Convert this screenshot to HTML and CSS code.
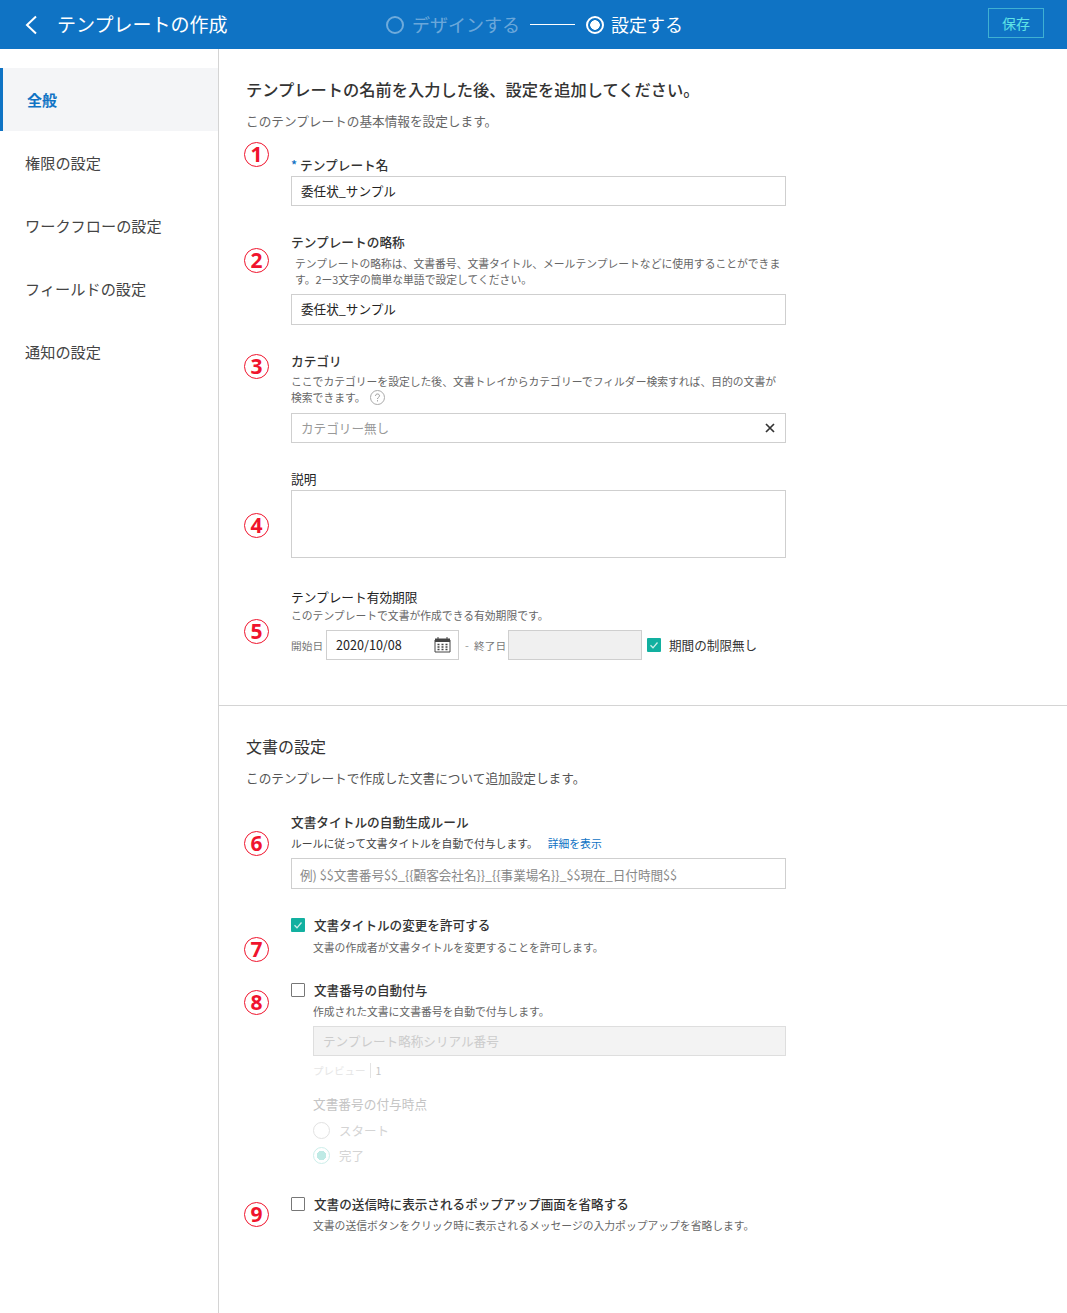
FILE: index.html
```html
<!DOCTYPE html>
<html lang="ja">
<head>
<meta charset="utf-8">
<title>テンプレートの作成</title>
<link rel="stylesheet" href="styles.css">
</head>
<body>
<header class="topbar">
  <div class="topbar-left">
    <svg class="back" width="14" height="20" viewBox="0 0 14 20"><path d="M12 1.5 3 10l9 8.5" fill="none" stroke="#fff" stroke-width="2"/></svg>
    <span class="page-title">テンプレートの作成</span>
  </div>
  <div class="stepper">
    <span class="step step-off"><span class="step-ring"></span><span class="step-text">デザインする</span></span>
    <span class="step-line"></span>
    <span class="step step-on"><span class="step-ring step-ring-on"></span><span class="step-text">設定する</span></span>
  </div>
  <button class="save">保存</button>
</header>
<div class="shell">
  <nav class="side">
    <a class="side-item active">全般</a>
    <a class="side-item">権限の設定</a>
    <a class="side-item">ワークフローの設定</a>
    <a class="side-item">フィールドの設定</a>
    <a class="side-item">通知の設定</a>
  </nav>
  <main class="main">
    <span class="pin p1">1</span><span class="pin p2">2</span><span class="pin p3">3</span>
    <span class="pin p4">4</span><span class="pin p5">5</span><span class="pin p6">6</span>
    <span class="pin p7">7</span><span class="pin p8">8</span><span class="pin p9">9</span>

    <section class="block block-top">
      <h1 class="h-strong">テンプレートの名前を入力した後、設定を追加してください。</h1>
      <p class="lead lead-1">このテンプレートの基本情報を設定します。</p>

      <div class="field f1">
        <div class="label"><span class="req">*</span> テンプレート名</div>
        <div class="input">委任状_サンプル</div>
      </div>
      <div class="field f2">
        <div class="label">テンプレートの略称</div>
        <p class="desc desc-in">テンプレートの略称は、文書番号、文書タイトル、メールテンプレートなどに使用することができます。2ー3文字の簡単な単語で設定してください。</p>
        <div class="input input-31">委任状_サンプル</div>
      </div>
      <div class="field f3">
        <div class="label">カテゴリ</div>
        <p class="desc">ここでカテゴリーを設定した後、文書トレイからカテゴリーでフィルダー検索すれば、目的の文書が検索できます。<svg class="help" width="15" height="15" viewBox="0 0 15 15"><circle cx="7.500" cy="7.500" r="7" fill="none" stroke="#aaa"/><path d="M5.500 6c0-1.300.9-2 2-2s2 .7 2 1.800c0 1.500-2 1.500-2 3.200M7.500 10.200v1.200" fill="none" stroke="#999"/></svg></p>
        <div class="input input-select"><span class="ph">カテゴリー無し</span>
          <svg width="10" height="10" viewBox="0 0 10 10"><path d="M1 1l8 8M9 1l-8 8" stroke="#333" stroke-width="1.700"/></svg>
        </div>
      </div>
      <div class="field f4">
        <div class="label">説明</div>
        <div class="input textarea"></div>
      </div>
      <div class="field f5">
        <div class="label">テンプレート有効期限</div>
        <p class="desc">このテンプレートで文書が作成できる有効期限です。</p>
        <div class="date-row">
          <span class="date-cap">開始日</span>
          <div class="input date">2020/10/08
            <svg width="17" height="16" viewBox="0 0 17 16"><path d="M1 3h15v12H1z" fill="none" stroke="#444"/><path d="M1 1.500h15V5H1z" fill="#444"/><path d="M4 0v3M13 0v3" stroke="#444"/><path d="M3.500 7.500h2M7.500 7.500h2M11.500 7.500h2M3.500 10h2M7.500 10h2M11.500 10h2M3.500 12.500h2M7.500 12.500h2M11.500 12.500h2" stroke="#444" stroke-width="1.300"/></svg>
          </div>
          <span class="date-dash">-</span>
          <span class="date-cap">終了日</span>
          <div class="input date-off"></div>
          <span class="box on"><svg width="14" height="14" viewBox="0 0 14 14"><path d="M3.500 7.300 6 9.800l4.500-5.300" fill="none" stroke="#cfeee9" stroke-width="1.300"/></svg></span>
          <span class="check-text">期間の制限無し</span>
        </div>
      </div>
    </section>

    <section class="block block-doc">
      <h2 class="h-plain">文書の設定</h2>
      <p class="lead lead-2">このテンプレートで作成した文書について追加設定します。</p>

      <div class="field f6">
        <div class="label">文書タイトルの自動生成ルール</div>
        <p class="desc desc-6"><span class="desc-dark">ルールに従って文書タイトルを自動で付与します。</span><a class="link">詳細を表示</a></p>
        <div class="input input-31 ph-input">例) $$文書番号$$_{{顧客会社名}}_{{事業場名}}_$$現在_日付時間$$</div>
      </div>

      <div class="opt o7">
        <div class="opt-head"><span class="box on"><svg width="14" height="14" viewBox="0 0 14 14"><path d="M3.500 7.300 6 9.800l4.500-5.300" fill="none" stroke="#cfeee9" stroke-width="1.300"/></svg></span><span class="check-text">文書タイトルの変更を許可する</span></div>
        <p class="opt-desc">文書の作成者が文書タイトルを変更することを許可します。</p>
      </div>
      <div class="opt o8">
        <div class="opt-head"><span class="box"></span><span class="check-text">文書番号の自動付与</span></div>
        <p class="opt-desc">作成された文書に文書番号を自動で付与します。</p>
        <div class="off-group">
          <div class="input off-input">テンプレート略称シリアル番号</div>
          <div class="preview"><span class="preview-cap">プレビュー</span><span class="preview-val">1</span></div>
          <div class="off-label">文書番号の付与時点</div>
          <div class="radio-row r1"><span class="radio"></span>スタート</div>
          <div class="radio-row r2"><span class="radio radio-on"></span>完了</div>
        </div>
      </div>
      <div class="opt o9">
        <div class="opt-head"><span class="box"></span><span class="check-text">文書の送信時に表示されるポップアップ画面を省略する</span></div>
        <p class="opt-desc">文書の送信ボタンをクリック時に表示されるメッセージの入力ポップアップを省略します。</p>
      </div>
    </section>
  </main>
</div>
</body>
</html>
```
FILE: styles.css
```css
* { box-sizing: border-box; }
html, body { margin: 0; padding: 0; height: 1313px; overflow: hidden; }
body {
  background: #fff;
  color: #333;
  font-family: "Noto Sans CJK JP", "Noto Sans", sans-serif;
  font-size: 13px;
}
h1, h2, p { margin: 0; font-weight: 400; }

.topbar {
  height: 49px;
  background: #0f73c4;
  display: grid;
  grid-template-columns: 386px 1fr auto;
  align-items: center;
  padding-right: 23px;
  color: #fff;
}
.topbar-left { display: flex; align-items: center; padding-left: 24px; }
.back { flex: none; }
.page-title { margin-left: 19px; font-size: 19px; line-height: 26px; padding-bottom: 2px; }
.stepper { display: flex; align-items: center; }
.step { display: flex; align-items: center; font-size: 18px; line-height: 24px; }
.step-text { padding-bottom: 2px; }
.step-off { color: rgba(255,255,255,.4); }
.step-ring {
  width: 18px; height: 18px; border-radius: 50%;
  border: 2px solid currentColor;
  margin-right: 8px;
  flex: none;
}
.step-ring-on {
  margin-right: 7px;
  background: radial-gradient(circle, #fff 0 4.500px, transparent 5px);
}
.step-line { width: 45px; height: 1px; background: #fff; margin: 0 11px 0 10px; }
.save {
  width: 56px; height: 30px;
  align-self: start;
  margin-top: 8px;
  background: transparent;
  border: 1px solid #3fb0d2;
  color: #5fe3e6;
  font: 14px "Noto Sans CJK JP", sans-serif;
  padding: 0;
}

.shell { display: flex; height: 1264px; }
.side { width: 219px; flex: none; border-right: 1px solid #d4d4d4; padding-top: 19px; }
.side-item {
  display: flex; align-items: center;
  height: 63px;
  padding: 0 0 2px 25px;
  font-size: 15.200px;
  color: #444;
}
.side-item.active {
  background: #f4f5f7;
  border-left: 3px solid #0f73c4;
  padding: 0 0 0 24px;
  color: #0f73c4;
  font-weight: 700;
  font-size: 15px;
}

.main { flex: 1; position: relative; }
.pin {
  position: absolute; left: 25px;
  width: 25px; height: 25px; border-radius: 50%;
  border: 1.500px solid #f0142d;
  color: #f0142d;
  font: 700 21px/22px "Open Sans", sans-serif;
  text-align: center;
  background: #fff;
}
.p1 { top: 93px; }  .p2 { top: 199px; } .p3 { top: 305px; }
.p4 { top: 464px; } .p5 { top: 570px; } .p6 { top: 782px; }
.p7 { top: 888px; } .p8 { top: 941px; } .p9 { top: 1153px; }

.block-top { padding: 28px 27px 0; height: 657px; border-bottom: 1px solid #d4d4d4; }
.block-doc { padding: 28px 27px 0; }
.h-strong { font-size: 16.250px; line-height: 24px; font-weight: 500; color: #333; }
.h-plain { font-size: 16px; line-height: 24px; color: #333; }
.lead { font-size: 12.650px; line-height: 18px; color: #666; }
.lead-1 { margin-top: 11px; }
.lead-2 { margin-top: 11px; color: #555; }

.field { margin-left: 45px; width: 495px; }
.f1 { margin-top: 26px; }
.f2 { margin-top: 27px; }
.f3 { margin-top: 27px; }
.f4 { margin-top: 27px; }
.f5 { margin-top: 30px; }
.f6 { margin-top: 26px; }
.label { font-size: 12.700px; line-height: 18px; font-weight: 500; color: #333; }
.f4 .label, .f5 .label { font-weight: 400; color: #222; }
.req { color: #0f73c4; }
.desc { font-size: 10.800px; line-height: 16px; color: #666; margin-top: 4px; }
.desc-in { padding-left: 4px; }
.f3 .desc { margin-top: 3px; }
.f5 .desc { margin-top: 1px; }
.desc-dark { color: #444; margin-right: 10px; }
.link { color: #0f73c4; }
.help { margin-left: 4px; vertical-align: -3px; }
.input {
  height: 30px;
  margin-top: 2px;
  border: 1px solid #cfcfcf;
  background: #fff;
  padding: 0 0 2px 9px;
  display: flex; align-items: center;
  font-size: 12.600px;
  color: #222;
}
.input-31 { height: 31px; margin-top: 7px; }
.f3 .input { margin-top: 8px; }
.input-select { justify-content: space-between; padding-right: 10px; }
.input-select svg { margin-top: 1px; }
.ph { color: #999; }
.ph-input { color: #888; padding: 1px 0 0 8px; font-size: 12.600px; }
.textarea { height: 68px; }

.date-row { display: flex; align-items: center; margin-top: 7px; height: 30px; }
.date-cap { font-size: 10.700px; color: #777; width: 32px; flex: none; white-space: nowrap; }
.date {
  width: 133px; margin: 0 0 0 3px; flex: none;
  justify-content: space-between; padding-right: 7px;
}
.date svg { margin-top: 2px; }
.date-dash { color: #999; margin: 0 5px 0 6px; width: 4px; font-size: 11px; flex: none; }
.date-off {
  width: 134px; margin: 0 5px 0 2px; flex: none; background: #f0f0f0;
}
.box {
  width: 14px; height: 14px; flex: none;
  border: 1px solid #777;
  border-radius: 1px;
  background: #fff;
  display: block;
}
.box svg { display: block; }
.box.on { background: #12b0a0; border: 0; }
.check-text { margin-left: 8px; font-size: 12.600px; line-height: 18px; color: #333; white-space: nowrap; }

.opt { margin-left: 45px; width: 495px; }
.o7 { margin-top: 27px; }
.o8 { margin-top: 26px; }
.o9 { margin-top: 31px; }
.opt-head { display: flex; align-items: center; height: 18px; }
.opt-head .check-text { font-weight: 500; margin-left: 9px; padding-bottom: 1px; }
.opt-desc { margin: 5px 0 0 22px; font-size: 10.800px; line-height: 16px; color: #666; }
.o8 .opt-desc, .o9 .opt-desc { margin-top: 4px; }
.off-group { margin-left: 22px; }
.off-input {
  height: 30px; margin-top: 7px;
  background: #f3f3f3; border-color: #dedede;
  color: #ccc;
}
.preview { display: flex; align-items: center; margin-top: 6px; height: 16px; font-size: 10.500px; color: #ddd; }
.preview-cap { padding-right: 4px; border-right: 1px solid #e4e4e4; color: #e6e6e6; }
.preview-val { padding-left: 5px; color: #c6c6c6; }
.off-label { margin-top: 17px; font-size: 12.700px; line-height: 18px; color: #c4c4c4; }
.radio-row { display: flex; align-items: center; height: 18px; font-size: 12.500px; color: #d4d4d4; }
.r1 { margin-top: 8px; }
.r2 { margin-top: 7px; }
.radio {
  width: 17px; height: 17px; border-radius: 50%;
  border: 1px solid #e2e2e2; margin-right: 9px; flex: none;
}
.radio-on {
  border-color: #cdeeea;
  background: radial-gradient(circle, #bfeae5 0 4.500px, #fff 5px);
}
```
